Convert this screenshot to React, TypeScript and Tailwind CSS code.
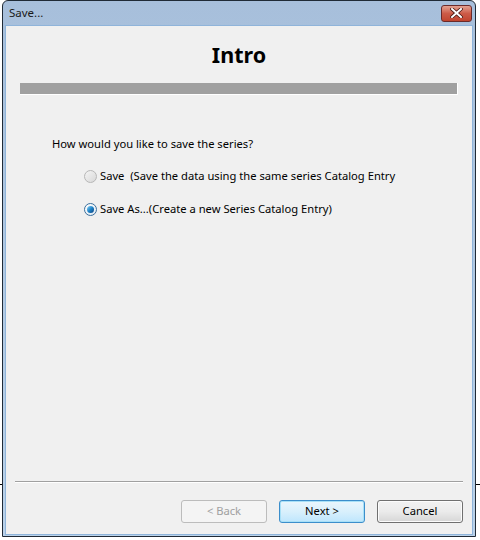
export default function App() {
  return (
    <div
      className="flex h-[540px] w-[480px] bg-white text-[11.2px] text-black"
      style={{ fontFamily: '"Noto Sans", "Open Sans", sans-serif' }}
    >
      {/* bits of the window behind */}
      <div className="w-[2px] pt-[484px]">
        <div className="h-px bg-black" />
      </div>

      <div className="flex h-[537px] w-[474px] flex-col rounded-t-[6px] border border-[#1f2a36] bg-gradient-to-b from-[#a7bfdb] to-[#bad2ea]">
        {/* title bar */}
        <div className="flex h-[24px] items-center justify-between pl-[6px] pr-[3px]">
          <span className="text-[11.5px] text-[#1a1a1a]">Save...</span>
          <div className="flex h-[17px] w-[31px] items-center justify-center rounded-[3px] border border-[#6b2a2a] bg-gradient-to-b from-[#e3a191] via-[#cc5b48] to-[#c0442f]">
            <svg width="13" height="10" viewBox="0 0 13 10">
              <path
                d="M2 1 L11 9 M11 1 L2 9"
                stroke="#4a1a14"
                strokeWidth="3.6"
                strokeLinecap="square"
              />
              <path
                d="M2 1 L11 9 M11 1 L2 9"
                stroke="#ffffff"
                strokeWidth="2"
                strokeLinecap="square"
              />
            </svg>
          </div>
        </div>

        {/* client area */}
        <div className="mx-[2px] mb-[1px] flex flex-1 flex-col border border-[#8fb4da] bg-[#f0f0f0]">
          <h1 className="mt-[13px] text-center text-[21.5px] font-bold leading-[32px]">
            Intro
          </h1>
          <div className="mx-[14px] mt-[12px] h-[12px] border-b border-r border-white bg-[#a0a0a0]" />

          <p className="ml-[46px] mt-[41px] leading-[16px]">
            How would you like to save the series?
          </p>

          <div className="ml-[78px] mt-[16px] flex flex-col gap-[17px]">
            <label className="flex items-center gap-[3px] leading-[16px]">
              <span className="flex h-[13px] w-[13px] items-center justify-center rounded-full border border-[#b7b7b7] bg-gradient-to-br from-[#f4f4f4] to-[#d8d8d8]" />
              <span className="whitespace-pre">
                Save  (Save the data using the same series Catalog Entry
              </span>
            </label>
            <label className="flex items-center gap-[3px] leading-[16px]">
              <span className="flex h-[13px] w-[13px] items-center justify-center rounded-full border border-[#3b6f9c] bg-gradient-to-br from-[#ffffff] to-[#dde8f2]">
                <span className="h-[7px] w-[7px] rounded-full bg-gradient-to-br from-[#7fd1f5] via-[#1d84c9] to-[#0c3f7c]" />
              </span>
              <span>Save As...(Create a new Series Catalog Entry)</span>
            </label>
          </div>

          <div className="flex-1" />

          <div className="mx-[9px] h-[2px] border-b border-white bg-[#a0a0a0]" />

          <div className="mb-[11px] mr-[9px] mt-[17px] flex justify-end gap-[12px]">
            <button className="h-[23px] w-[86px] rounded-[3px] border border-[#bcbcbc] bg-[#f4f4f4] text-[#a0a0a0]">
              &lt; Back
            </button>
            <button className="h-[23px] w-[86px] rounded-[3px] border border-[#3c8ecb] bg-gradient-to-b from-[#eaf6fd] via-[#d9f0fc] to-[#bee6fd] shadow-[inset_0_0_0_1px_#a8e0f7]">
              Next &gt;
            </button>
            <button className="h-[23px] w-[86px] rounded-[3px] border border-[#707070] bg-gradient-to-b from-[#f2f2f2] via-[#ebebeb] to-[#d6d6d6] shadow-[inset_0_0_0_1px_#fcfcfc]">
              Cancel
            </button>
          </div>
        </div>
      </div>

      <div className="w-[4px] pt-[484px]">
        <div className="h-px bg-black" />
      </div>
    </div>
  );
}
